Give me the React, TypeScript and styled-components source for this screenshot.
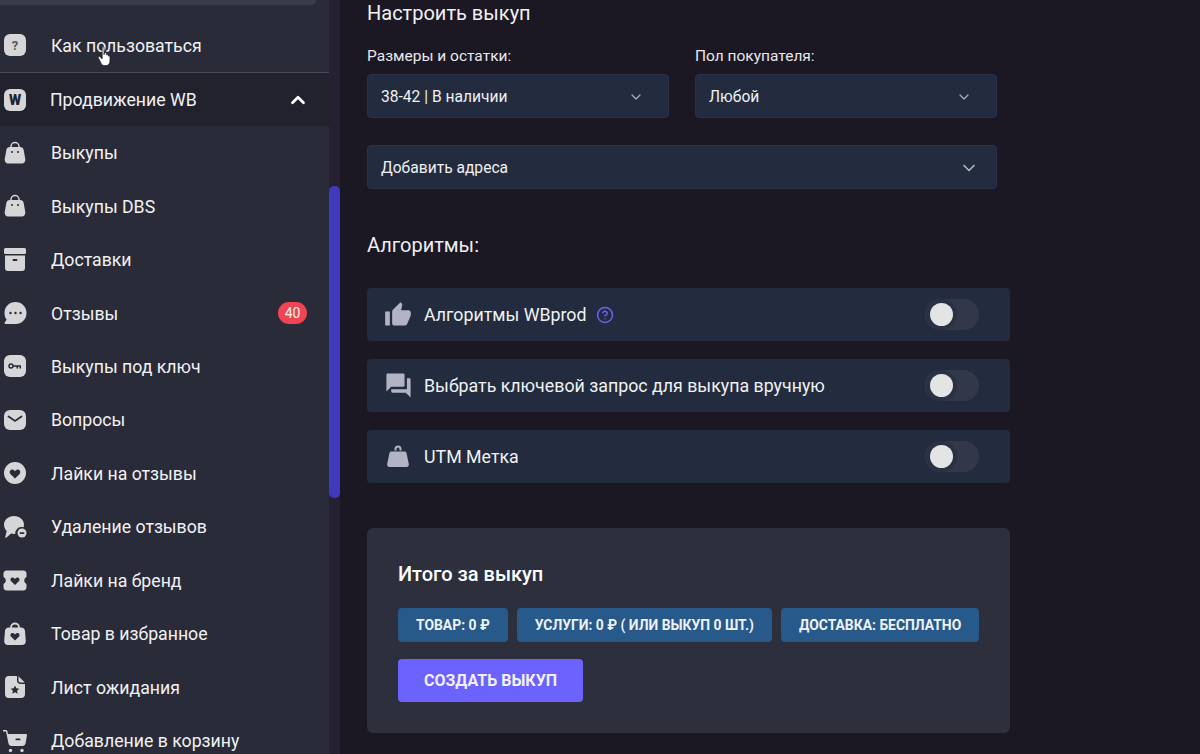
import type { ReactNode } from "react";
import styled, { createGlobalStyle } from "styled-components";
import { ChevronDown, ChevronUp, CircleHelp } from "lucide-react";
import { MdThumbUp, MdQuestionAnswer } from "react-icons/md";

const GlobalStyle = createGlobalStyle`
  html, body {
    margin: 0;
    padding: 0;
    height: 100%;
    overflow: hidden;
    background: #1b1723;
  }
  * { box-sizing: border-box; }
  body { font-family: Roboto, "Liberation Sans", sans-serif; }
`;

const ICON = "#d6d6d9";
const CUT = "#2a2b38";

const Svg = ({ children, size = 24 }: { children: ReactNode; size?: number }) => (
  <svg width={size} height={size} viewBox="0 0 24 24" fill={ICON}>
    {children}
  </svg>
);

const Bag = () => (
  <Svg>
    <path d="M8 7.500V5.500a4 4 0 0 1 8 0v2" fill="none" stroke={ICON} strokeWidth="1.500" />
    <path d="M7 6h10c2.200 0 3.300 1.200 3.700 3.200l1.500 8.300c.5 3-1.200 5-3.700 5h-13c-2.500 0-4.200-2-3.700-5l1.500-8.300C3.700 7.200 4.800 6 7 6z" />
    <circle cx="9" cy="11" r="1" fill={CUT} />
    <circle cx="15" cy="11" r="1" fill={CUT} />
  </Svg>
);

const icons: Record<string, ReactNode> = {
  help: (
    <Svg>
      <rect x="1" y="1" width="22" height="22" rx="6" />
      <text x="12" y="17" textAnchor="middle" fontSize="13" fontWeight="700" fontFamily="Roboto" fill="#55565f">?</text>
    </Svg>
  ),
  wb: (
    <Svg>
      <rect x="1" y="1" width="22" height="22" rx="6" />
      <text x="12" y="17" textAnchor="middle" fontSize="14" fontWeight="900" fontFamily="Roboto" fill="#22232e">W</text>
    </Svg>
  ),
  bag: <Bag />,
  box: (
    <Svg>
      <rect x="1" y="0" width="22" height="6" rx="1.500" />
      <path d="M2 7.500h20V20a3 3 0 0 1-3 3H5a3 3 0 0 1-3-3z" />
      <rect x="9.500" y="11" width="5" height="2" rx="1" fill={CUT} />
    </Svg>
  ),
  chat: (
    <Svg>
      <path d="M12.500 1C18.800 1 23.500 5.700 23.500 12S18.800 23 12.500 23H2.500c-1 0-1.300-1-.7-1.700l1.800-2.500C2.300 17 1.500 14.600 1.500 12 1.500 5.700 6.200 1 12.500 1z" />
      <circle cx="7.500" cy="12" r="1.200" fill={CUT} />
      <circle cx="12.500" cy="12" r="1.200" fill={CUT} />
      <circle cx="17.500" cy="12" r="1.200" fill={CUT} />
    </Svg>
  ),
  key: (
    <Svg>
      <rect x="1" y="1" width="22" height="22" rx="6" />
      <circle cx="8" cy="12" r="2" fill="none" stroke="#2a2b38" strokeWidth="1.500" />
      <path d="M10 11.200h8v3.300h-1.500v-1.800h-1.500v1.800h-1.500v-1.800H10z" fill="#2a2b38" />
    </Svg>
  ),
  mail: (
    <Svg>
      <rect x="1" y="2" width="22" height="20" rx="6" />
      <path d="M5.500 8.500 12 13l6.500-4.500" fill="none" stroke={CUT} strokeWidth="1.800" strokeLinecap="round" />
    </Svg>
  ),
  heart: (
    <Svg>
      <circle cx="12" cy="12" r="11" />
      <path d="M12 17.500 7.600 13.200c-2.600-2.700.9-6.400 3.500-3.900l.9.900.9-.9c2.600-2.500 6.100 1.200 3.500 3.900z" fill={CUT} />
    </Svg>
  ),
  remove: (
    <Svg>
      <path d="M11 1c5.500 0 10 3.700 10 8.500 0 1-.2 1.900-.5 2.700A6.500 6.500 0 0 0 12.200 19H11c-1 0-2-.1-3-.4L3.500 22.500c-.8.500-1.500 0-1.200-.8L3.700 16C2 14.400 1 12.100 1 9.500 1 4.700 5.500 1 11 1z" />
      <circle cx="19" cy="18" r="4.500" />
      <rect x="16.500" y="17.200" width="5" height="1.700" rx=".8" fill={CUT} />
    </Svg>
  ),
  ticket: (
    <Svg>
      <path d="M4 2.500h16a3 3 0 0 1 3.500 3v2.800c0 1-.9 1.400-1.500 2-1 .9-1 3.500 0 4.400.6.600 1.500 1 1.500 2v2.800a3 3 0 0 1-3.500 3H4a3 3 0 0 1-3.500-3v-2.800c0-1 .9-1.400 1.500-2 1-.9 1-3.500 0-4.400-.6-.6-1.500-1-1.500-2V5.500a3 3 0 0 1 3.500-3z" />
      <path d="M12 17 8.200 13.300c-2.100-2.200.8-5.200 2.900-3.200l.9.800.9-.8c2.100-2 5 1 2.900 3.200z" fill={CUT} />
    </Svg>
  ),
  favBag: (
    <Svg>
      <path d="M8 7V5.500a4 4 0 0 1 8 0V7" fill="none" stroke={ICON} strokeWidth="1.800" />
      <path d="M6 5.500h12a4 4 0 0 1 4 3.600l.8 9.900a4 4 0 0 1-4 4H5.200a4 4 0 0 1-4-4L2 9.100a4 4 0 0 1 4-3.600z" />
      <path d="M12 18.500 8.200 14.800c-2.200-2.200.8-5.200 2.900-3.200l.9.800.9-.8c2.100-2 5.100 1 2.900 3.200z" fill={CUT} />
    </Svg>
  ),
  doc: (
    <Svg>
      <path d="M6 1h8v4.500c0 2 1.500 3.500 3.500 3.500H22v10a4 4 0 0 1-4 4H6a4 4 0 0 1-4-4V5a4 4 0 0 1 4-4z" />
      <path d="M15.500 1.200 21.800 7.500h-4.300a2 2 0 0 1-2-2z" />
      <path d="m12 10.500 1.300 2.800 3 .4-2.200 2.100.6 3-2.700-1.500-2.700 1.500.6-3-2.200-2.100 3-.4z" fill={CUT} />
    </Svg>
  ),
  cart: (
    <Svg>
      <path d="M0 1h2.800c.8 0 1.400.5 1.600 1.300L5 5h18c.7 0 1.100.6 1 1.200l-1.500 8.300c-.3 1.500-1.500 2.500-3 2.500H8.500c-1.500 0-2.700-1-3-2.500L3 2.600H0z" />
      <circle cx="7.500" cy="21.500" r="1.700" />
      <circle cx="19" cy="21.500" r="1.700" />
      <rect x="12.500" y="9.500" width="5" height="1.800" rx=".9" fill={CUT} />
    </Svg>
  ),
};

const menu = [
  { icon: "bag", label: "Выкупы" },
  { icon: "bag", label: "Выкупы DBS" },
  { icon: "box", label: "Доставки" },
  { icon: "chat", label: "Отзывы", badge: "40" },
  { icon: "key", label: "Выкупы под ключ" },
  { icon: "mail", label: "Вопросы" },
  { icon: "heart", label: "Лайки на отзывы" },
  { icon: "remove", label: "Удаление отзывов" },
  { icon: "ticket", label: "Лайки на бренд" },
  { icon: "favBag", label: "Товар в избранное" },
  { icon: "doc", label: "Лист ожидания" },
  { icon: "cart", label: "Добавление в корзину" },
];

const App = () => {
  return (
    <Page>
      <GlobalStyle />
      <Sidebar>
        <SearchStub />
        <HelpRow>
          <IconSlot>{icons.help}</IconSlot>
          <MenuLabel>Как пользоваться</MenuLabel>
          <HandCursor width="16" height="21" viewBox="0 0 16 22">
            <path
              d="M5 1.800c0-1.300 2-1.300 2 0V9l.5-2c.7-.6 1.800-.3 1.900.7v1.500c.6-.9 1.800-.6 1.900.4v1c.7-.7 1.900-.3 1.900.7v4.700c0 2.500-1.700 4.500-4.200 4.500H7.500c-1.600 0-2.700-.8-3.500-2.200L1.100 12.500c-.6-1.200.9-2.200 1.900-1.100L5 13.500z"
              fill="#fff"
              stroke="#20212b"
              strokeWidth=".8"
            />
          </HandCursor>
        </HelpRow>
        <ActiveRow>
          <IconSlot>{icons.wb}</IconSlot>
          <ActiveLabel>Продвижение WB</ActiveLabel>
          <ChevronUp size={22} color="#fff" strokeWidth={3} />
        </ActiveRow>
        {menu.map((item) => (
          <MenuRow key={item.label}>
            <IconSlot>{icons[item.icon]}</IconSlot>
            <MenuLabel>{item.label}</MenuLabel>
            {item.badge && <Badge>{item.badge}</Badge>}
          </MenuRow>
        ))}
      </Sidebar>
      <ScrollTrack>
        <ScrollThumb />
      </ScrollTrack>

      <Main>
        <Heading>Настроить выкуп</Heading>
        <SelectGrid>
          <Field>
            <FieldLabel>Размеры и остатки:</FieldLabel>
            <Select>
              38-42 | В наличии
              <ChevronDown size={16} color="#a5a9b5" />
            </Select>
          </Field>
          <Field>
            <FieldLabel>Пол покупателя:</FieldLabel>
            <Select>
              Любой
              <ChevronDown size={16} color="#a5a9b5" />
            </Select>
          </Field>
          <WideSelect>
            Добавить адреса
            <ChevronDown size={20} color="#b4b7c1" />
          </WideSelect>
        </SelectGrid>

        <SectionTitle>Алгоритмы:</SectionTitle>
        <OptionList>
          <Option>
            <OptionIcon>
              <MdThumbUp size={28} />
            </OptionIcon>
            <OptionText>Алгоритмы WBprod</OptionText>
            <CircleHelp size={18} color="#6a62f0" />
            <Toggle />
          </Option>
          <Option>
            <OptionIcon>
              <MdQuestionAnswer size={29} />
            </OptionIcon>
            <OptionText>Выбрать ключевой запрос для выкупа вручную</OptionText>
            <Toggle />
          </Option>
          <Option>
            <OptionIcon>
              <svg width="24" height="24" viewBox="0 0 24 24" fill="currentColor">
                <path d="M8.500 5.500V4a3.500 3.500 0 0 1 7 0v1.500h-2V4a1.500 1.500 0 0 0-3 0v1.500z" />
                <path d="M5.500 6.500h13c1.100 0 1.900.7 2.100 1.700l2.200 10.800c.3 1.500-.5 3-2.300 3H3.500c-1.800 0-2.600-1.500-2.300-3L3.400 8.200c.2-1 1-1.700 2.100-1.700z" />
              </svg>
            </OptionIcon>
            <OptionText>UTM Метка</OptionText>
            <Toggle />
          </Option>
        </OptionList>

        <TotalCard>
          <TotalTitle>Итого за выкуп</TotalTitle>
          <ChipRow>
            <Chip>Товар: 0 ₽</Chip>
            <Chip>Услуги: 0 ₽ ( или выкуп 0 шт.)</Chip>
            <Chip>Доставка: бесплатно</Chip>
          </ChipRow>
          <CreateButton>Создать выкуп</CreateButton>
        </TotalCard>
      </Main>
    </Page>
  );
};

export default App;

const Page = styled.div`
  display: flex;
  width: 1200px;
  height: 754px;
  overflow: hidden;
  background: #1b1723;
  color: #fff;
`;

const Sidebar = styled.aside`
  width: 329px;
  flex-shrink: 0;
  background: #2a2b38;
`;

const SearchStub = styled.div`
  width: 316px;
  height: 5px;
  margin-bottom: 13px;
  background: #3a3b4a;
  border-radius: 0 0 8px 0;
`;

const MenuRow = styled.div`
  position: relative;
  display: flex;
  align-items: center;
  height: 53.45px;
  padding: 0 22px 0 3px;
`;

const HelpRow = styled(MenuRow)`
  height: 55px;
  border-bottom: 1px solid #4a4b58;
`;

const ActiveRow = styled(MenuRow)`
  height: 53px;
  padding-right: 20px;
  background: #22222f;
`;

const IconSlot = styled.span`
  display: flex;
  width: 48px;
  flex-shrink: 0;
`;

const MenuLabel = styled.span`
  flex: 1;
  padding-top: 1px;
  font-size: 17.7px;
  color: #f1f1f3;
  white-space: nowrap;
`;

const ActiveLabel = styled(MenuLabel)`
  margin-left: -1px;
`;

const HandCursor = styled.svg`
  position: absolute;
  left: 97px;
  top: 28px;
`;

const Badge = styled.span`
  display: flex;
  align-items: center;
  justify-content: center;
  width: 29px;
  height: 22px;
  border-radius: 11px;
  background: #f04452;
  font-size: 14px;
  color: #f3f3f3;
`;

const ScrollTrack = styled.div`
  width: 11px;
  flex-shrink: 0;
  padding-top: 186px;
  background: #272032;
`;

const ScrollThumb = styled.div`
  height: 312px;
  border-radius: 5px;
  background: #4139bd;
`;

const Main = styled.main`
  flex: 1;
  padding: 0 0 0 27px;
`;

const Heading = styled.h2`
  margin: 0;
  height: 27px;
  font-size: 20px;
  line-height: 27px;
  font-weight: 400;
  color: #f1f1f3;
`;

const SelectGrid = styled.div`
  display: grid;
  grid-template-columns: 302px 302px;
  column-gap: 26px;
  row-gap: 27px;
  width: 630px;
  margin-top: 20px;
`;

const Field = styled.div`
  display: flex;
  flex-direction: column;
`;

const FieldLabel = styled.label`
  height: 27px;
  font-size: 15.5px;
  line-height: 18px;
  color: #e8e8ec;
`;

const Select = styled.div`
  display: flex;
  align-items: center;
  justify-content: space-between;
  height: 44px;
  padding: 1px 24px 0 13px;
  background: #222c3e;
  border: 1px solid #283347;
  border-radius: 4px;
  font-size: 15.6px;
  color: #f0f0f3;
`;

const WideSelect = styled(Select)`
  grid-column: 1 / -1;
  padding-right: 17px;
`;

const SectionTitle = styled.h3`
  margin: 43px 0 0;
  height: 27px;
  font-size: 20px;
  line-height: 27px;
  font-weight: 400;
  color: #eeeef1;
`;

const OptionList = styled.div`
  display: flex;
  flex-direction: column;
  gap: 18px;
  width: 643px;
  margin-top: 29px;
`;

const Option = styled.div`
  display: flex;
  align-items: center;
  gap: 9px;
  height: 53px;
  padding: 0 31px 0 14px;
  background: #222c3e;
  border-radius: 4px;
`;

const OptionIcon = styled.span`
  display: flex;
  align-items: center;
  justify-content: center;
  width: 34px;
  color: #b4b3c6;
`;

const OptionText = styled.span`
  margin-bottom: 1px;
  font-size: 17.8px;
  color: #f1f1f3;
`;

const Toggle = styled.span`
  position: relative;
  width: 54px;
  height: 31px;
  margin-left: auto;
  border-radius: 16px;
  background: #323849;

  &::after {
    content: "";
    position: absolute;
    left: 5px;
    top: 4px;
    width: 23px;
    height: 23px;
    border-radius: 50%;
    background: #e4e4e4;
    box-shadow: 0 0 0 4px #2a3143;
  }
`;

const TotalCard = styled.section`
  width: 643px;
  height: 205px;
  margin-top: 45px;
  padding: 33px 31px 0;
  background: #2d2f3d;
  border-radius: 6px;
`;

const TotalTitle = styled.h4`
  margin: 0;
  height: 26px;
  font-size: 20px;
  line-height: 26px;
  font-weight: 500;
`;

const ChipRow = styled.div`
  display: flex;
  gap: 9px;
  margin-top: 21px;
`;

const Chip = styled.span`
  display: flex;
  align-items: center;
  height: 34px;
  padding: 0 18px;
  background: #27598a;
  border-radius: 4px;
  font-size: 13.9px;
  font-weight: 700;
  text-transform: uppercase;
  white-space: nowrap;
  color: #eef1f5;
`;

const CreateButton = styled.button`
  display: block;
  width: 185px;
  height: 43px;
  margin-top: 17px;
  border: 0;
  border-radius: 4px;
  background: #6c63ff;
  font-family: inherit;
  font-size: 16px;
  font-weight: 700;
  text-transform: uppercase;
  color: #f1f1f5;
`;
